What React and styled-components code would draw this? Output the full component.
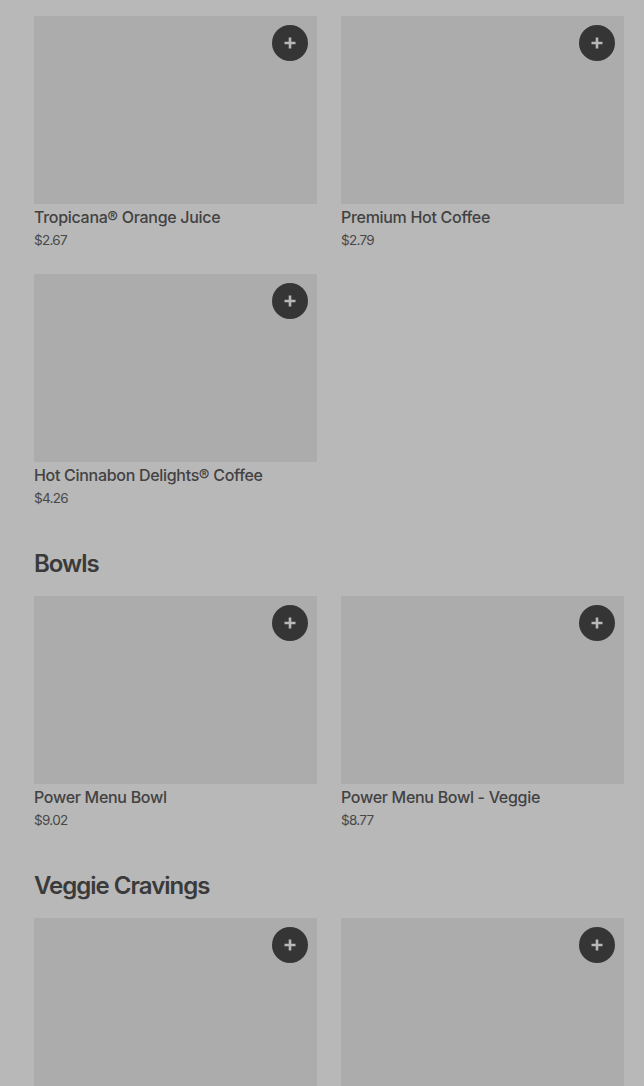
import React from "react";
import styled, { createGlobalStyle } from "styled-components";

const Global = createGlobalStyle`
  html, body { margin:0; padding:0; background:#b8b8b8; }
  body { font-family: Inter, "Noto Sans", Arial, sans-serif; color:#3b3b3b; height:1086px; overflow:hidden; }
`;

const Page = styled.div`
  padding:16px 20px 0 34px;
`;

const Section = styled.section`
  & + & { margin-top:40px; }
`;

const Heading = styled.h2`
  margin:0 0 16px;
  font-size:24px;
  line-height:32px;
  font-weight:600;
  letter-spacing:-1px;
  color:#3a3a3a;
`;

const Grid = styled.div`
  display:grid;
  grid-template-columns:283px 283px;
  column-gap:24px;
  row-gap:24px;
`;

const Card = styled.div`
  display:flex;
  flex-direction:column;
  height:234px;
`;

const Thumb = styled.div`
  position:relative;
  height:188px;
  background:#acacac;
`;

const AddBtn = styled.button`
  position:absolute;
  top:9px;
  right:9px;
  width:36px;
  height:36px;
  border:none;
  border-radius:50%;
  background:#353535;
  display:flex;
  align-items:center;
  justify-content:center;
  padding:0;
`;

const Title = styled.div`
  margin-top:1px;
  font-size:16px;
  line-height:24px;
  font-weight:500;
  letter-spacing:-0.3px;
  color:#424242;
`;

const Price = styled.div`
  margin-top:1px;
  font-size:13.5px;
  line-height:20px;
  color:#474747;
  letter-spacing:-0.7px;
`;

const Plus = () => (
  <svg width="14" height="14" viewBox="0 0 14 14">
    <path d="M7 1.5v11M1.5 7h11" stroke="#b8b8b8" strokeWidth="2.6" />
  </svg>
);

const sections = [
  {
    title: null,
    items: [
      ["Tropicana® Orange Juice", "$2.67"],
      ["Premium Hot Coffee", "$2.79"],
      ["Hot Cinnabon Delights® Coffee", "$4.26"],
    ],
  },
  {
    title: "Bowls",
    items: [
      ["Power Menu Bowl", "$9.02"],
      ["Power Menu Bowl - Veggie", "$8.77"],
    ],
  },
  {
    title: "Veggie Cravings",
    items: [
      ["", ""],
      ["", ""],
    ],
  },
];

function App() {
  return (
    <Page>
      <Global />
      {sections.map((s, i) => (
        <Section key={i}>
          {s.title && <Heading>{s.title}</Heading>}
          <Grid>
            {s.items.map(([name, price], j) => (
              <Card key={j}>
                <Thumb>
                  <AddBtn aria-label="Add">
                    <Plus />
                  </AddBtn>
                </Thumb>
                {name && <Title>{name}</Title>}
                {price && <Price>{price}</Price>}
              </Card>
            ))}
          </Grid>
        </Section>
      ))}
    </Page>
  );
}

export default App;
